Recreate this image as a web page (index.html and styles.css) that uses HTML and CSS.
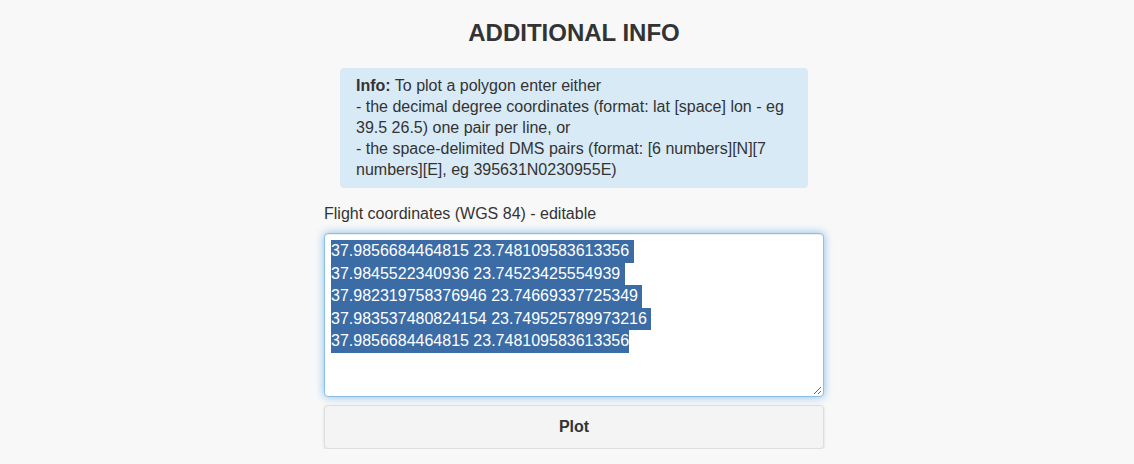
FILE: index.html
```html
<!DOCTYPE html>
<html>
<head>
<meta charset="utf-8">
<link rel="stylesheet" href="styles.css">
</head>
<body>
<div class="page">
  <h1 class="title">ADDITIONAL INFO</h1>
  <div class="info">
    <b>Info:</b> To plot a polygon enter either<br>
    - the decimal degree coordinates (format: lat [space] lon - eg 39.5 26.5) one pair per line, or<br>
    - the space-delimited DMS pairs (format: [6 numbers][N][7 numbers][E], eg 395631N0230955E)
  </div>
  <label class="label">Flight coordinates (WGS 84) - editable</label>
  <div class="textarea">
    <span class="sel nl">37.9856684464815 23.748109583613356</span>
    <span class="sel nl">37.9845522340936 23.74523425554939</span>
    <span class="sel nl">37.982319758376946 23.74669337725349</span>
    <span class="sel nl">37.983537480824154 23.749525789973216</span>
    <span class="sel">37.9856684464815 23.748109583613356</span>
    <svg class="grip" width="10" height="10" viewBox="0 0 10 10"><path d="M9 2 L2 9 M9 6 L6 9" stroke="#666" stroke-width="1"/></svg>
  </div>
  <button class="btn">Plot</button>
</div>
</body>
</html>
```
FILE: styles.css
```css
html, body {
  margin: 0;
  padding: 0;
  background: #f8f8f8;
}
body {
  font-family: "Liberation Sans", Arial, sans-serif;
  font-size: 16px;
  color: #333;
  padding-left: 14px;
}
.page {
  width: 500px;
  margin: 0 auto;
  display: flex;
  flex-direction: column;
}
.title {
  margin: 20px 0 0;
  font-size: 24px;
  line-height: 26px;
  font-weight: bold;
  text-align: center;
  color: #333;
}
.info {
  margin: 22px 16px 0;
  padding: 7px 16px 8px;
  background: #d9eaf7;
  border-radius: 4px;
  line-height: 21px;
}
.info b { font-weight: bold; }
.label {
  margin-top: 15px;
  line-height: 21px;
}
.textarea {
  position: relative;
  margin-top: 9px;
  height: 164px;
  box-sizing: border-box;
  padding: 6px 6px;
  background: #fff;
  border: 1px solid #8cc0e8;
  border-radius: 4px;
  box-shadow: inset 0 1px 1px rgba(0,0,0,.075), 0 0 8px rgba(102,175,233,.8);
  display: flex;
  flex-direction: column;
  align-items: flex-start;
  line-height: 22.5px;
  color: #fff;
}
.sel {
  display: block;
  background: #3b6ca6;
  color: #fff;
}
.sel.nl { padding-right: 4.5px; }
.grip {
  position: absolute;
  right: 1px;
  bottom: 1px;
}
.btn {
  margin-top: 8px;
  height: 44px;
  font-family: "Liberation Sans", Arial, sans-serif;
  font-size: 16px;
  font-weight: bold;
  color: #333;
  background: #f4f4f4;
  border: 1px solid #dedede;
  border-radius: 4px;
  box-shadow: 0 1px 3px rgba(0,0,0,.12);
  padding: 0;
}
```
